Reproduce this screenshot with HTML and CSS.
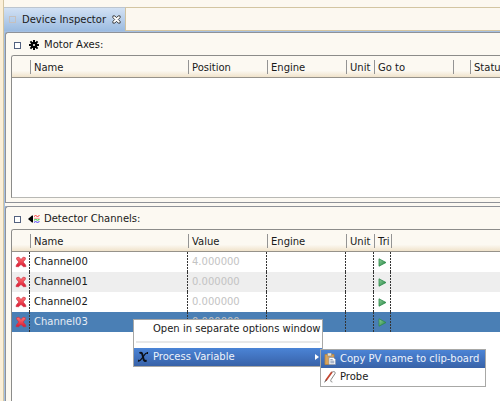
FILE: index.html
```html
<!DOCTYPE html>
<html lang="en">
<head>
<meta charset="utf-8">
<title>Device Inspector</title>
<link rel="stylesheet" href="styles.css">
</head>
<body>
<svg class="defs" aria-hidden="true">
  <defs>
    <linearGradient id="red" x1="0" y1="0" x2="0" y2="1"><stop offset="0" stop-color="#f77"/><stop offset="1" stop-color="#dc1830"/></linearGradient>
    <linearGradient id="green" x1="0" y1="0" x2="1" y2="1"><stop offset="0" stop-color="#8fce9b"/><stop offset="1" stop-color="#20833f"/></linearGradient>
    <symbol id="cross" viewBox="0 0 12 12"><path d="M1.8 1.6 4 1.2 6 3.6 8 1.2l2.2.4.3 1.4L8.2 6l2.4 3 .4 1.6-2.5.1L6 8.4l-2.5 2.3-2.5-.1L1.4 9l2.4-3L1.5 3z" fill="url(#red)" stroke="#cc3346" stroke-width=".7"/></symbol>
    <symbol id="play" viewBox="0 0 9 9"><path d="M1 .8 8 4.5 1 8.2z" fill="url(#green)" stroke="#2b8a4a" stroke-width=".8"/></symbol>
  </defs>
</svg>
<main class="view">
  <div class="tabs">
    <button class="tab" type="button">
      <span class="tab-box"></span>
      <span>Device Inspector</span>
      <svg class="close" width="9" height="9" viewBox="0 0 10 10"><path d="M1 1h2.2L5 3l1.8-2H9v2L7 5l2 2v2H6.8L5 7 3.2 9H1V7l2-2-2-2z" fill="#fff" stroke="#333" stroke-width="1"/></svg>
    </button>
    <div class="tab-rest"></div>
  </div>
  <div class="body">
    <section class="group">
      <h2 class="title">
        <span class="fold"></span>
        <svg width="12" height="12" viewBox="0 0 12 12"><g stroke="#000" stroke-width="2"><path d="M6 1v10M1 6h10M2.4 2.4l7.2 7.2M9.6 2.4 2.4 9.6"/></g><circle cx="6" cy="6" r="3.3"/><circle cx="6" cy="6" r="1.1" fill="#fcf9f2"/></svg>
        <span>Motor Axes:</span>
      </h2>
      <div class="frame">
        <table class="grid">
          <colgroup><col class="c-icon"><col class="c-name"><col class="c-mid"><col class="c-mid"><col class="c-unit"><col class="c-mid"><col class="c-small"><col></colgroup>
          <thead><tr><th></th><th>Name</th><th>Position</th><th>Engine</th><th>Unit</th><th>Go to</th><th></th><th>Status</th></tr></thead>
        </table>
      </div>
    </section>
    <section class="group group-last">
      <h2 class="title">
        <span class="fold"></span>
        <svg width="12" height="12" viewBox="0 0 12 12"><path d="M0 6 4 2.5h1v7H4z"/><g fill="none"><path d="M6 3.5 7.5 2.5 9.5 3.5 11.5 2.5" stroke="#f33"/><path d="M6 5.3h5.5" stroke="#f99"/><path d="M6 7.2 7.5 6.4 9.5 7.2 11.5 6.4" stroke="#2c3"/><path d="M6 9.4 7.5 8.6 9.5 9.4 11.5 8.6" stroke="#43f"/></g></svg>
        <span>Detector Channels:</span>
      </h2>
      <div class="frame">
        <table class="grid">
          <colgroup><col class="c-icon"><col class="c-name"><col class="c-mid"><col class="c-mid"><col class="c-unit"><col class="c-small"><col></colgroup>
          <thead><tr><th></th><th>Name</th><th>Value</th><th>Engine</th><th>Unit</th><th>Tri</th><th></th></tr></thead>
          <tbody>
            <tr><td><svg class="cross"><use href="#cross"/></svg></td><td>Channel00</td><td class="value">4.000000</td><td></td><td></td><td><svg class="play"><use href="#play"/></svg></td><td></td></tr>
            <tr><td><svg class="cross"><use href="#cross"/></svg></td><td>Channel01</td><td class="value">0.000000</td><td></td><td></td><td><svg class="play"><use href="#play"/></svg></td><td></td></tr>
            <tr><td><svg class="cross"><use href="#cross"/></svg></td><td>Channel02</td><td class="value">0.000000</td><td></td><td></td><td><svg class="play"><use href="#play"/></svg></td><td></td></tr>
            <tr class="selected"><td><svg class="cross"><use href="#cross"/></svg></td><td>Channel03</td><td class="value">0.000000</td><td></td><td></td><td><svg class="play"><use href="#play"/></svg></td><td></td></tr>
          </tbody>
        </table>
      </div>
    </section>
  </div>
</main>
<div class="menu menu-main" role="menu">
  <button class="item" type="button" role="menuitem"><span class="icon"></span>Open in separate options window</button>
  <hr class="rule">
  <button class="item active" type="button" role="menuitem">
    <span class="icon"><svg width="12" height="12" viewBox="0 0 12 12" fill="none" stroke="#0b1018"><path d="M2.5 2.2C5 .5 5.3 3 6 6s1.2 5 3.6 3.4" stroke-width="1.9"/><path d="M11 2C8.5 1.2 7.5 4 6 6S3 10.7 1 9.8" stroke-width="1.2"/><path d="M10 2h1M1 9.6h1.3" stroke-width="1.8"/></svg></span>Process Variable
    <svg class="arrow" width="4" height="8" viewBox="0 0 4 8"><path d="M0 1 4 4 0 7z" fill="#fff"/></svg>
  </button>
</div>
<div class="menu menu-sub" role="menu">
  <button class="item active" type="button" role="menuitem"><span class="icon"><svg width="12" height="12" viewBox="0 0 12 12"><path d="M1 1.5h9v10H1z" fill="#d9a35a" stroke="#b9853f" stroke-width=".8"/><path d="M3.5 0h4v3h-4z" fill="#e8e4d8" stroke="#888" stroke-width=".6"/><path d="M5 4.5h4.5l2 2v5H5z" fill="#fff" stroke="#8294b4" stroke-width=".7"/><path d="M6.3 6.7h2.4M6.3 8.2h4M6.3 9.8h4" stroke="#6478a0" stroke-width=".8"/></svg></span>Copy PV name to clip-board</button>
  <button class="item" type="button" role="menuitem"><span class="icon"><svg width="12" height="12" viewBox="0 0 12 12" fill="none" stroke-linecap="round"><path d="M7.6 1.4 2.2 9" stroke="#c44630" stroke-width="1.8"/><path d="M2.2 9 .8 11" stroke="#444" stroke-width=".9"/><path d="M8 1.2C10-.3 11.8 1 11 2.7L7.2 8.4C6.3 9.8 6.6 10.8 8 11" stroke="#777" stroke-width=".9"/></svg></span>Probe</button>
</div>
</body>
</html>
```
FILE: styles.css
```css
* { box-sizing: border-box; }

body {
  margin: 0;
  height: 100vh;
  overflow: hidden;
  background: #fcf8f0;
  color: #1a1a1a;
  font: 10px/14px "DejaVu Sans", sans-serif;
}

button {
  margin: 0;
  border: 0;
  background: none;
  color: inherit;
  font: inherit;
}

.defs { position: absolute; width: 0; height: 0; }

.view {
  display: flex;
  flex-direction: column;
  height: 100vh;
  padding-top: 7px;
  margin-left: 3px;
  border-left: 1px solid #d3c5a2;
  box-shadow: -3px 0 #fbefd8;
}

.tabs { display: flex; height: 24px; }

.tab {
  display: flex;
  align-items: center;
  padding: 0 4px 0 5px;
  border-top: 1px solid #bcc5cf;
  border-right: 1px solid #d0c2a0;
  background: linear-gradient(#d2e1f4, #9bbbe0);
}

.tab-box {
  width: 7px;
  height: 7px;
  margin-right: 6px;
  border: 1px solid #c5c0be;
}

.close { margin-left: 6px; }

.tab-rest {
  flex: 1;
  border: solid #d3c5a2;
  border-width: 1px 0;
}

.body {
  display: flex;
  flex: 1;
  flex-direction: column;
  gap: 3px;
  min-height: 0;
  padding: 1px 0 0 1px;
  background: #a5c0e2;
}

.group {
  display: flex;
  flex-direction: column;
  height: 171px;
  padding: 0 0 4px 5px;
  border: 1px solid #8f9298;
  border-right: 0;
  border-top-left-radius: 3px;
  background: #fcf9f2;
  box-shadow: 0 3px #fcf9f2;
}

.group-last {
  flex: 1;
  min-height: 0;
  padding-bottom: 0;
  border-bottom: 0;
  box-shadow: none;
}

.title {
  display: flex;
  flex: none;
  align-items: center;
  height: 22px;
  margin: 0;
  padding: 2px 0 0 3px;
  font: inherit;
}

.title svg { margin: 0 4px 0 7px; }

.fold {
  width: 7px;
  height: 7px;
  border: 1px solid #53617f;
  background: #fff;
}

.frame {
  flex: 1;
  min-height: 0;
  overflow: hidden;
  border: 1px solid #8c8c8a;
  border-right: 0;
  border-bottom-color: #b8b8b4;
  border-top-left-radius: 3px;
  background: #fff;
}

.group-last .frame { border-bottom: 0; }

.grid {
  width: 100%;
  table-layout: fixed;
  border-spacing: 0;
}

.c-icon { width: 18px; }
.c-name { width: 158px; }
.c-mid { width: 79px; }
.c-unit { width: 28px; }
.c-small { width: 17px; }

th, td {
  padding: 0 0 0 4px;
  overflow: hidden;
  font-weight: normal;
  text-align: left;
  white-space: nowrap;
}

th {
  height: 22px;
  padding-top: 2px;
  border-bottom: 1px solid #96928a;
  background:
    linear-gradient(#949494, #949494) 0 4px / 1px 14px no-repeat,
    linear-gradient(#fcf9f2 70%, #f0e3cb);
}

th:first-child { background: linear-gradient(#fcf9f2 70%, #f0e3cb); }

td {
  height: 20px;
  background: repeating-linear-gradient(#333 0 2px, transparent 2px 3px) right / 1px 100% no-repeat;
}

td:last-child { background: none; }
td:first-child { padding-left: 3px; }
tbody tr:nth-child(even) { background: #eeeeee; }
tbody tr.selected { background: #4a7fb5; color: #e6edf5; }
.value { color: #c3c3c3; }

.cross, .play { display: block; }
.cross { width: 12px; height: 12px; }
.play { width: 9px; height: 9px; }

.menu {
  position: absolute;
  display: flex;
  flex-direction: column;
  border: 1px solid #a8a8a6;
  background: #fff;
}

.menu-main { left: 133px; top: 319px; width: 190px; }
.menu-sub { left: 320px; top: 349px; width: 166px; }

.item {
  display: flex;
  align-items: center;
  height: 18px;
  padding: 0 3px;
  text-align: left;
  white-space: nowrap;
}

.icon {
  display: flex;
  flex: none;
  width: 16px;
}

.active {
  background: linear-gradient(#4b84d6, #3862a8);
  color: #eef3fb;
}

.rule {
  height: 2px;
  margin: 3px 2px 5px;
  border: 0;
  background: #e8e8e8;
}

.arrow { margin-left: auto; }
```
